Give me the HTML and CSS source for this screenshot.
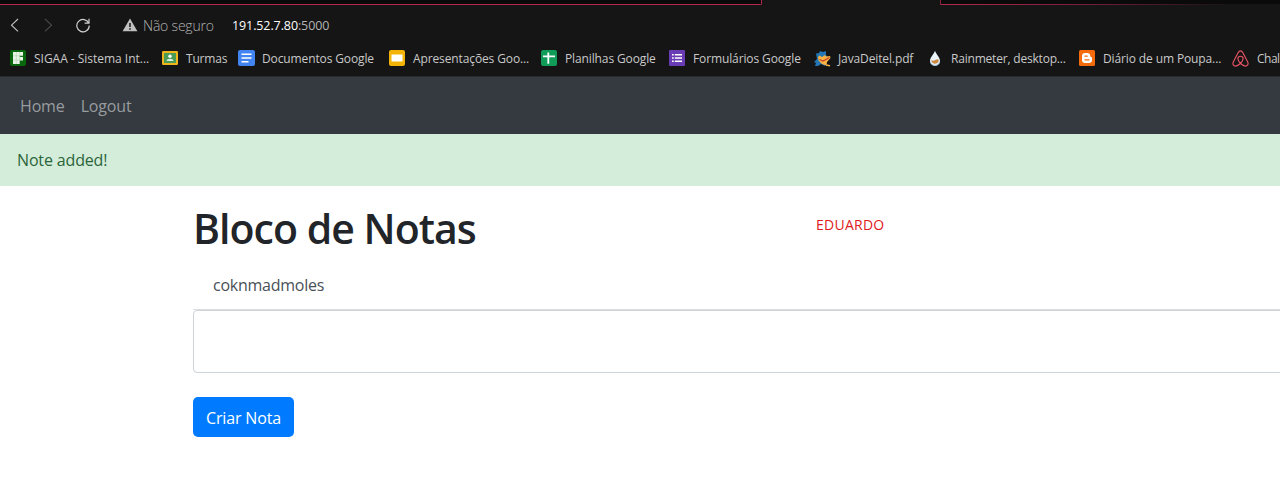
FILE: index.html
```html
<!DOCTYPE html>
<html lang="pt-BR">
<head>
<meta charset="utf-8">
<title>Bloco de Notas</title>
<link rel="stylesheet" href="styles.css">
</head>
<body>
<header class="browser">
  <div class="tabstrip"><div class="tabs-left"></div><div class="tab-active"></div><div class="tabs-right"></div></div>
  <div class="address">
    <svg class="back" width="10" height="14" viewBox="0 0 10 14"><path d="M8 1 1.5 7.2 8 13.3" fill="none" stroke="#c4c4c4" stroke-width="1.1"/></svg>
    <svg class="forward" width="10" height="14" viewBox="0 0 10 14"><path d="M1 1 7.5 7.2 1 13.3" fill="none" stroke="#4a4a4a" stroke-width="1.1"/></svg>
    <svg class="reload" width="16" height="16" viewBox="0 0 16 16"><path d="M13.7 6.2A6.2 6.2 0 1 0 14.2 8.6M14 1.8V6.2H9.6" fill="none" stroke="#cfcfcf" stroke-width="1.2"/></svg>
    <svg class="warn" width="16" height="14" viewBox="0 0 16 14"><path d="M8 .6 15.4 13.3H.6Z" fill="#c0c0c0"/><path d="M8 5v4M8 10.2v1.6" stroke="#151515" stroke-width="1.5"/></svg>
    <span class="insecure">Não seguro</span>
    <span class="url"><span class="host">191.52.7.80</span><span class="port">:5000</span></span>
  </div>
  <nav class="bookmarks">
    <a class="bm w152"><svg width="16" height="16" viewBox="0 0 16 16"><rect width="16" height="16" rx="2" fill="#08670d"/><path d="M3 2h10v3.800H9.700v1.200H13v3.600H9.700V14H3Z" fill="#eaf5e8"/><path d="M6.300 2v12M9.700 2v9M3 5.800h10M3 10h7" stroke="#a4cda2" stroke-width=".5"/></svg><span class="t-sigaa">SIGAA - Sistema Int...</span></a>
    <a class="bm w76"><svg width="16" height="16" viewBox="0 0 16 16"><rect y="1" width="16" height="14" rx="1.2" fill="#f0b51d"/><rect x="2" y="3" width="12" height="10" fill="#4b9b57"/><circle cx="8" cy="6.3" r="1.7" fill="#fff"/><path d="M4.5 11c.3-3 6.700-3 7 0z" fill="#d9eedc"/></svg><span class="t-turmas">Turmas</span></a>
    <a class="bm w151"><svg width="17" height="16" viewBox="0 0 17 16"><rect width="17" height="16" rx="2" fill="#4384f3"/><path d="M3.500 4.300h10M3.500 8h10M3.500 11.700h7" stroke="#fff" stroke-width="1.600"/></svg><span class="t-docs">Documentos Google</span></a>
    <a class="bm w152"><svg width="16" height="16" viewBox="0 0 16 16"><rect width="16" height="16" rx="2" fill="#f3b407"/><rect x="2.500" y="4.500" width="11" height="7" fill="#fff"/></svg><span class="t-slides">Apresentações Goo...</span></a>
    <a class="bm w128"><svg width="16" height="16" viewBox="0 0 16 16"><rect width="16" height="16" rx="2" fill="#109b59"/><path d="M7.300 2.500v11.300M2 6.300h12" stroke="#fff" stroke-width="1.800"/></svg><span class="t-sheets">Planilhas Google</span></a>
    <a class="bm w145"><svg width="16" height="16" viewBox="0 0 16 16"><rect width="16" height="16" rx="1" fill="#693cb5"/><path d="M3 4.800h1.700M3 8h1.700M3 11.200h1.700M5.800 4.800H13M5.800 8H13M5.800 11.200H13" stroke="#fff" stroke-width="1.600"/></svg><span class="t-forms">Formulários Google</span></a>
    <a class="bm w113"><svg width="17" height="17" viewBox="0 0 17 17"><path d="M2 3.500 5 3 6 1 9 2 12 1 12 5 14 8 11 16 7 14 4 16 1 16 2 13 0 12 3 9Z" fill="#2476b5"/><path d="M5.500 5.500 8 7 11 5 12 6.500 16 6 16.500 8 13 12 12.500 15.500 8 14 4.500 10.500 4 7Z" fill="#f9b343"/><path d="M5.500 9.500 9 11 15.500 7.500" fill="none" stroke="#c5402a" stroke-width="1.300"/><path d="m12 15 4 .8" stroke="#f9b343" stroke-width="1.500"/></svg><span class="t-java">JavaDeitel.pdf</span></a>
    <a class="bm w152"><svg width="16" height="16" viewBox="0 0 16 16"><path d="M8 .8C7 4.500 3 7 3 11a5 5 0 0 0 10 0C13 7 9 4.500 8 .8Z" fill="#eaf4fb"/><path d="M4.300 10q2 1.300 4 0t3.500 0c0 5-7.500 5-7.500 0Z" fill="#cc8a43"/><path d="M3.500 12c1 4.500 8 4.500 9 0" fill="none" stroke="#8db7d7" stroke-width=".8"/></svg><span class="t-rain">Rainmeter, desktop...</span></a>
    <a class="bm w153"><svg width="16" height="16" viewBox="0 0 16 16"><rect width="16" height="16" rx="1.500" fill="#f56a0b"/><path d="M6 3h2.300A3 3 0 0 1 11.300 6q0 1 .9 1 .8.100.8 1v2a3 3 0 0 1-3 3H6a3 3 0 0 1-3-3V6a3 3 0 0 1 3-3Z" fill="#fff"/><path d="M6 6.200h2.200M6 9.800h4" stroke="#f56a0b" stroke-width="1.300" stroke-linecap="round"/></svg><span class="t-diario">Diário de um Poupa...</span></a>
    <a class="bm"><svg width="17" height="17" viewBox="0 0 17 17"><path d="M8.500.8C7.300.8 6.700 1.600 6.100 2.700L1.300 12c-1.100 2.200.3 4.100 2.300 4.100 2.600 0 7.500-4.500 7.500-7.300a2.600 2.600 0 0 0-5.200 0c0 2.800 4.900 7.300 7.500 7.300 2 0 3.400-1.900 2.300-4.100L10.900 2.700C10.300 1.600 9.700.8 8.500.8Z" fill="none" stroke="#e85364" stroke-width="1.150"/></svg><span class="t-chal">Chal</span></a>
  </nav>
</header>
<nav class="navbar"><a class="home">Home</a><a class="logout">Logout</a></nav>
<div class="alert"><span>Note added!</span></div>
<main class="content">
  <div class="heading"><h1>Bloco de Notas</h1><span class="owner">EDUARDO</span></div>
  <div class="note"><span>coknmadmoles</span></div>
  <textarea class="field" aria-label="Nota"></textarea>
  <button class="create">Criar Nota</button>
</main>
</body>
</html>
```

FILE: styles.css
```css
* { box-sizing: border-box; }
body { margin: 0; height: 487px; overflow: hidden; background: #fff; color: #212529; font-family: "Open Sans", "Noto Sans", sans-serif; font-size: 16px; }
.browser { height: 77px; background: #151515; border-bottom: 1px solid #292c2f; overflow: hidden; }
.tabstrip { display: flex; height: 5px; }
.tabs-left { width: 762px; background: #0a0a0b; border: solid #b52850; border-width: 0 1px 1px 0; border-bottom-right-radius: 2px; }
.tab-active { width: 178px; }
.tabs-right { flex: 1; border-left: 1px solid #8c2041; background: linear-gradient(90deg, #b52850 0, #751d38 45%, #151515 85%) bottom / 100% 1px no-repeat, #0a0a0b; }
.address { display: flex; align-items: center; height: 40px; padding-left: 10px; white-space: nowrap; }
.forward { margin-left: 24px; }
.reload { margin-left: 21px; }
.warn { margin-left: 31px; }
.insecure { margin-left: 5px; width: 89px; color: #b2b2b2; font-size: 14px; font-weight: 300; letter-spacing: -.2px; }
.url { font-size: 12.5px; letter-spacing: -.1px; }
.host { color: #fff; }
.port { color: #b4b4b4; }
.bookmarks { display: flex; align-items: center; height: 26px; padding-left: 10px; }
.bm { display: flex; flex: none; align-items: center; gap: 8px; height: 18px; color: #c9c9c9; font-size: 12px; white-space: nowrap; letter-spacing: -.12px; }
.t-sigaa { letter-spacing: -.02px; }
.t-turmas, .t-rain { letter-spacing: -.2px; }
.t-java { margin-left: -1px; }
.t-docs { margin-left: -1px; }
.t-chal { letter-spacing: -.5px; }
.w152 { width: 152px; }
.w76 { width: 76px; }
.w151 { width: 151px; }
.w128 { width: 128px; }
.w145 { width: 145px; }
.w113 { width: 113px; }
.w153 { width: 153px; }
.navbar { display: flex; align-items: center; gap: 16px; height: 57px; padding: 1px 20px 0; background: #343a40; color: #999c9f; letter-spacing: -.15px; }
.alert { display: flex; align-items: center; height: 52px; padding-left: 17px; background: #d4edda; color: #2b6539; letter-spacing: -.15px; }
.content { padding-left: 193px; }
.heading { display: flex; height: 75px; align-items: flex-start; }
h1 { width: 623px; margin: 13px 0 0; font-size: 41px; line-height: 58px; font-weight: 600; letter-spacing: -.97px; }
.owner { margin-top: 28px; color: #e01b22; font-size: 14px; line-height: 22px; letter-spacing: .25px; }
.note { display: flex; align-items: center; height: 49px; padding-left: 20px; border-bottom: 1px solid #dcdddd; color: #495057; letter-spacing: -.25px; }
.field { display: block; width: 1110px; height: 63px; border: 1px solid #ced4da; border-radius: 4px; resize: none; outline: none; }
.create { display: block; width: 101px; height: 40px; margin-top: 24px; padding: 1px 0 0; border: 0; border-radius: 5px; background: #007bff; color: #fff; font: 16px "Open Sans", sans-serif; letter-spacing: -.15px; }
```
